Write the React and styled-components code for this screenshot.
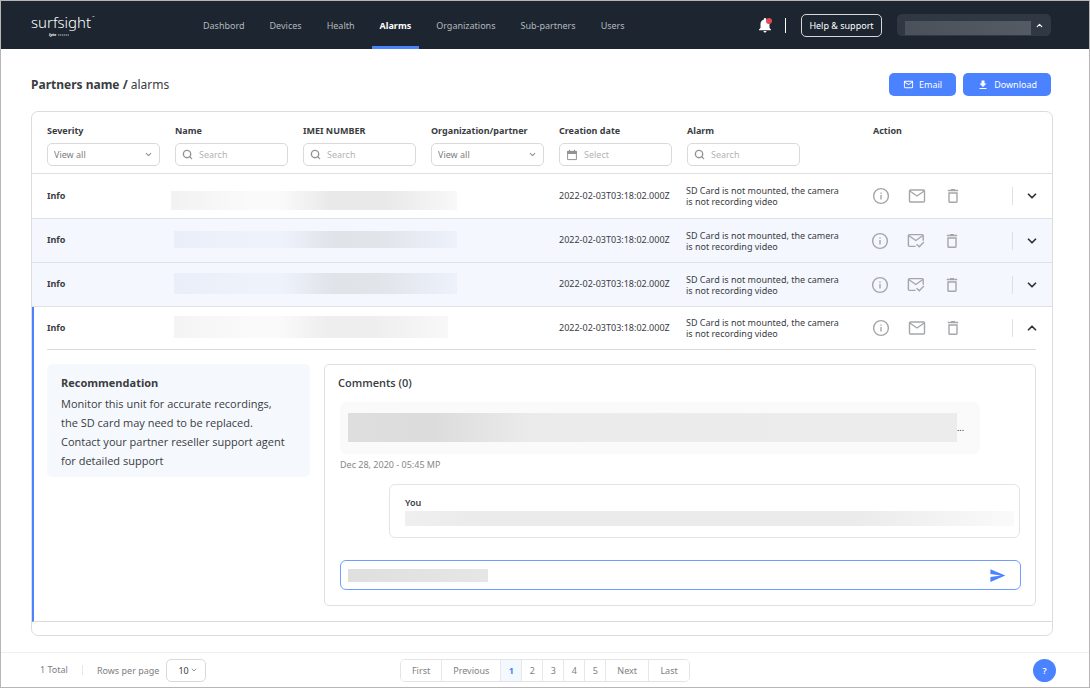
import React from "react";
import styled, { createGlobalStyle } from "styled-components";
import { FiChevronDown, FiChevronUp, FiSearch } from "react-icons/fi";
import {
  MdDownload,
  MdNotifications,
  MdOutlineEmail,
  MdSend,
} from "react-icons/md";

const GlobalStyle = createGlobalStyle`
  *, *::before, *::after {
    box-sizing: border-box;
  }

  body {
    margin: 0;
    background: #fff;
    color: #3a3c3f;
    font-family: "Noto Sans", "Open Sans", sans-serif;
    font-size: 9px;
  }

  button, input, select {
    font-family: inherit;
    font-size: inherit;
    color: inherit;
  }

  button {
    cursor: pointer;
  }

  p, h1, h2, h3 {
    margin: 0;
  }
`;

const Page = styled.div`
  display: flex;
  flex-direction: column;
  min-height: 100vh;
  border: 1px solid #b9b5b7;
`;

/* ---------- top bar ---------- */

const TopBar = styled.header`
  display: flex;
  align-items: center;
  height: 48px;
  padding: 0 38px 0 30px;
  background: #1c2530;
  color: #fff;
`;

const Logo = styled.a`
  display: block;
  width: 66px;
  color: #fff;

  svg {
    display: block;
  }
`;

const Nav = styled.nav`
  display: flex;
  gap: 9px;
  height: 100%;
  margin-left: 98px;
`;

const NavLink = styled.a`
  display: flex;
  align-items: center;
  padding: 3px 8px 0;
  border-bottom: 3px solid ${({ $active }) => ($active ? "#4a82ff" : "transparent")};
  color: ${({ $active }) => ($active ? "#fff" : "#b4b8bd")};
  font-weight: ${({ $active }) => ($active ? 700 : 400)};
  text-decoration: none;
`;

const TopRight = styled.div`
  display: flex;
  align-items: center;
  gap: 15px;
  margin-left: auto;
`;

const Bell = styled.button`
  position: relative;
  display: flex;
  padding: 0;
  border: 0;
  background: none;
  color: #fff;
`;

const BellBadge = styled.span`
  position: absolute;
  top: 2px;
  right: 2px;
  width: 6px;
  height: 6px;
  border-radius: 50%;
  background: #e5484d;
`;

const TopDivider = styled.span`
  width: 1px;
  height: 15px;
  margin-left: -4px;
  background: #fff;
`;

const HelpButton = styled.button`
  height: 23px;
  width: 81px;
  padding: 0;
  border: 1px solid #d6d8da;
  border-radius: 5px;
  background: none;
  color: #fff;
`;

const Account = styled.button`
  display: flex;
  align-items: center;
  gap: 4px;
  width: 154px;
  height: 22px;
  padding: 0 7px 0 8px;
  border: 0;
  border-radius: 5px;
  background: #303843;
  color: #fff;
`;

const AccountName = styled.span`
  flex: 1;
  height: 14px;
  margin-top: 6px;
  background: linear-gradient(90deg, #4a515b, #555b64);
`;

/* ---------- title row ---------- */

const Main = styled.main`
  flex: 1;
  padding: 24px 36px 16px 30px;
`;

const TitleRow = styled.div`
  display: flex;
  align-items: center;
  gap: 7px;
  margin-bottom: 15px;
  padding-right: 2px;
`;

const Title = styled.h1`
  margin-right: auto;
  color: #3a3c3f;
  font-size: 12px;
  font-weight: 400;
  line-height: 22px;
`;

const PrimaryButton = styled.button`
  display: flex;
  align-items: center;
  justify-content: center;
  gap: 5px;
  height: 23px;
  padding: 0 14px;
  border: 0;
  border-radius: 5px;
  background: #4a82ff;
  color: #fff;
`;

/* ---------- alarms table ---------- */

const Card = styled.section`
  padding-bottom: 13px;
  border: 1px solid #dcdcdc;
  border-radius: 7px;
`;

const Table = styled.table`
  width: 100%;
  table-layout: fixed;
  border-collapse: separate;
  border-spacing: 0;
`;

const Col = styled.col`
  width: ${({ $width }) => ($width ? `${$width}px` : "auto")};
`;

const HeadCell = styled.th`
  height: 62px;
  padding: 12px 0 0 15px;
  border-bottom: 1px solid #dfdfe0;
  text-align: left;
  vertical-align: top;
  font-weight: 700;
`;

const HeadLabel = styled.label`
  display: block;
  height: 14px;
  margin-bottom: 5px;
  line-height: 14px;
`;

const Field = styled.span`
  display: flex;
  align-items: center;
  gap: 6px;
  width: 113px;
  height: 23px;
  padding: 0 6px;
  border: 1px solid #d9d9db;
  border-radius: 5px;
  background: #fff;
  color: #929396;
  font-weight: 400;

  svg {
    flex: none;
  }
`;

const FieldInput = styled.input`
  flex: 1;
  min-width: 0;
  padding: 0;
  border: 0;
  outline: 0;
  background: none;

  &::placeholder {
    color: #b3b4b6;
    opacity: 1;
  }
`;

const FieldSelect = styled.select`
  flex: 1;
  min-width: 0;
  padding: 0;
  border: 0;
  outline: 0;
  appearance: none;
  background: none;
  color: #7d7f82;
`;

const Row = styled.tr`
  height: ${({ $read, $open }) => ($open ? 42 : $read ? 44 : 45)}px;
  background: ${({ $read }) => ($read ? "#f4f7fe" : "#fff")};

  > td {
    border-bottom: ${({ $open }) => ($open ? "0" : "1px solid #dfe1e5")};
  }

  > td:first-child {
    padding-left: ${({ $open }) => ($open ? 13 : 15)}px;
    border-left: ${({ $open }) => ($open ? "2px solid #4a82ff" : "0")};
  }
`;

const Cell = styled.td`
  padding: 0 0 0 15px;
  line-height: 11px;
  vertical-align: middle;
`;

const Severity = styled(Cell)`
  padding-bottom: 2px;
  font-weight: 700;
`;

const DateCell = styled(Cell)`
  padding-bottom: 2px;
`;

const AlarmCell = styled(Cell)`
  padding-left: 14px;
`;

const HiddenCell = styled(Cell)`
  padding: ${({ $low }) => ($low ? "0 0 8px 11px" : "0 0 3px 14px")};
  vertical-align: ${({ $low }) => ($low ? "bottom" : "middle")};
`;

const tones = {
  grey: "#f2f2f2, #fafafa 28%, #fafafa 38%, #e9e9e9 56%, #e9e9e9 75%, #f8f8f8",
  blue: "#eaeef8, #eef2fb 28%, #eef2fb 38%, #e0e3e8 56%, #e1e4e9 72%, #edf1fa",
  mist: "#f4f4f4, #fafafa 28%, #fafafa 38%, #eeeeee 56%, #eeeeee 72%, #f8f8f8",
  block: "#dedede, #dcdcdc 14%, #ebebeb 30%, #ececec",
  reply: "#efefef, #ebebeb 12%, #ebebeb 74%, #fafafa",
  draft: "#dfdfdf, #e6e6e6",
};

const Redacted = styled.span`
  display: block;
  width: ${({ $width }) => ($width ? `${$width}px` : "100%")};
  height: ${({ $height }) => $height}px;
  background: linear-gradient(90deg, ${({ $tone }) => tones[$tone]});
`;

const ActionCell = styled(Cell)`
  padding-left: ${({ $read }) => ($read ? 12 : 13)}px;
`;

const Actions = styled.span`
  display: flex;
  gap: 16px;
`;

const IconButton = styled.button`
  display: flex;
  padding: 0;
  border: 0;
  background: none;
  color: #a5a6a9;
`;

const ToggleCell = styled(Cell)`
  padding-left: 0;
`;

const ToggleBox = styled.span`
  display: flex;
  align-items: center;
  justify-content: center;
  height: 18px;
  border-left: 1px solid #dfe0e2;
`;

const Toggle = styled(IconButton)`
  color: #303235;
`;

/* ---------- opened alarm ---------- */

const DetailCell = styled.td`
  padding: 0 16px 15px 13px;
  border-left: 2px solid #4a82ff;
  border-bottom: 1px solid #dcdcdc;
`;

const Detail = styled.div`
  display: flex;
  align-items: flex-start;
  gap: 14px;
  padding-top: 14px;
  border-top: 1px solid #dcdcdc;
  font-family: "Open Sans", "Noto Sans", sans-serif;
`;

const Recommendation = styled.section`
  flex: none;
  width: 263px;
  padding: 8px 14px 7px;
  border-radius: 5px;
  background: #f5f9fe;
  font-size: 11px;
  line-height: 19px;
`;

const RecommendationTitle = styled.h2`
  font-size: 11px;
  font-weight: 700;
  line-height: 22px;
`;

const Comments = styled.section`
  flex: 1;
  display: flex;
  flex-direction: column;
  padding: 9px 14px 15px 15px;
  border: 1px solid #e0e0e0;
  border-radius: 5px;
`;

const CommentsTitle = styled.h2`
  margin: 0 0 10px -2px;
  font-size: 11px;
  font-weight: 600;
  line-height: 18px;
`;

const Message = styled.div`
  display: flex;
  align-items: center;
  height: 52px;
  margin-right: 41px;
  padding: 0 16px 1px 8px;
  border-radius: 6px;
  background: #fafafa;
  color: #222;
  line-height: 16px;
`;

const Stamp = styled.time`
  margin-top: 5px;
  color: #85878a;
  font-family: "Noto Sans", "Open Sans", sans-serif;
  line-height: 12px;
`;

const Reply = styled.div`
  height: 54px;
  margin: 13px 1px 22px 49px;
  padding: 11px 5px 0 15px;
  border: 1px solid #e4e4e4;
  border-radius: 6px;
`;

const Author = styled.strong`
  display: block;
  margin-bottom: 2px;
  font-family: "Noto Sans", "Open Sans", sans-serif;
  font-weight: 600;
  line-height: 13px;
`;

const Composer = styled.form`
  display: flex;
  align-items: center;
  height: 30px;
  padding: 0 14px 0 7px;
  border: 1px solid #6f9cff;
  border-radius: 6px;

  ${IconButton} {
    color: #4a82ff;
  }
`;

/* ---------- footer ---------- */

const Footer = styled.footer`
  display: grid;
  grid-template-columns: 1fr auto 1fr;
  align-items: center;
  height: 35px;
  padding: 0 33px;
  border-top: 1px solid #eeeeee;
  color: #7d7f82;
`;

const FooterLeft = styled.div`
  display: flex;
  align-items: center;
  gap: 7px;
  padding-left: 6px;
`;

const Total = styled.span`
  margin-right: 7px;
  padding-right: 14px;
  border-right: 1px solid #e6e6e6;
  line-height: 10px;
`;

const RowsSelect = styled(Field)`
  width: 40px;
  gap: 0;
  padding: 0 7px 0 11px;

  select {
    color: #3a3c3f;
  }
`;

const Pager = styled.nav`
  display: flex;
  height: 23px;
  border: 1px solid #e4e4e6;
  border-radius: 5px;
  overflow: hidden;
`;

const PageButton = styled.button`
  min-width: ${({ $word }) => ($word ? 40 : 21)}px;
  padding: 0 ${({ $word }) => ($word ? 11 : 0)}px;
  border: 0;
  border-right: 1px solid #e8e8ea;
  background: ${({ $current }) => ($current ? "#f3f7fe" : "#fff")};
  color: ${({ $current }) => ($current ? "#4a82ff" : "#7d7f82")};
  font-weight: ${({ $current }) => ($current ? 700 : 400)};

  &:last-child {
    border-right: 0;
  }
`;

const HelpBubble = styled.button`
  justify-self: end;
  width: 23px;
  height: 23px;
  padding: 0;
  border: 0;
  border-radius: 50%;
  background: #4a82ff;
  color: #fff;
  font-weight: 600;
`;

/* ---------- icons ---------- */

const Icon = ({ children, size = 20 }) => (
  <svg
    width={size}
    height={size}
    viewBox="0 0 20 20"
    fill="none"
    stroke="currentColor"
    strokeWidth="1.4"
    aria-hidden="true"
  >
    {children}
  </svg>
);

const InfoIcon = () => (
  <Icon>
    <circle cx="10" cy="10" r="7.4" />
    <path d="M10 9v4.4M10 6.4v1.3" />
  </Icon>
);

const MailIcon = () => (
  <Icon>
    <rect x="2.5" y="4" width="15" height="12" rx="1" />
    <path d="M2.8 5l7.2 5 7.2-5" />
  </Icon>
);

const MailReadIcon = () => (
  <Icon>
    <path d="M9.6 15.4H3.4a1 1 0 0 1-1-1V4.6a1 1 0 0 1 1-1h12.8a1 1 0 0 1 1 1v5.2" />
    <path d="M2.7 4.5l7.1 5 7.1-5" />
    <path d="M10.6 13.2l2.7 2.6 4.6-4.7" />
  </Icon>
);

const TrashIcon = () => (
  <Icon>
    <path d="M6 7h8v8.4a.8.8 0 0 1-.8.8H6.8a.8.8 0 0 1-.8-.8z" />
    <path d="M4.8 4.5h10.4M8 3.6h4" />
  </Icon>
);

const CalendarIcon = () => (
  <svg width="12" height="12" viewBox="0 0 12 12" fill="none" aria-hidden="true">
    <path d="M1.6 2.4h8.8v8.2H1.6z" stroke="currentColor" />
    <path d="M1.2 2h9.6v3H1.2z" fill="currentColor" />
    <path d="M3.5.8v2M8.5.8v2" stroke="currentColor" strokeWidth="1.2" />
  </svg>
);

const LogoMark = () => (
  <svg width="66" height="28" viewBox="0 0 66 28" fill="#fff" aria-hidden="true">
    <text x="0" y="17" fontSize="15" fontWeight="300">
      surfsight
    </text>
    <text x="61" y="7" fontSize="3">
      ™
    </text>
    <text x="18" y="25" fontSize="4" fontStyle="italic" fontWeight="700">
      lytx
    </text>
    <path d="M27 24h11" stroke="#fff" strokeDasharray="1.5 .5" opacity=".7" />
  </svg>
);

/* ---------- data ---------- */

const links = [
  "Dashbord",
  "Devices",
  "Health",
  "Alarms",
  "Organizations",
  "Sub-partners",
  "Users",
];

const columns = [
  { id: "severity", label: "Severity", width: 128, kind: "select" },
  { id: "name", label: "Name", width: 128, kind: "search" },
  { id: "imei", label: "IMEI NUMBER", width: 128, kind: "search" },
  { id: "org", label: "Organization/partner", width: 128, kind: "select" },
  { id: "created", label: "Creation date", width: 128, kind: "date" },
  { id: "alarm", label: "Alarm", width: 186, kind: "search" },
  { id: "action", label: "Action" },
];

const alarms = [
  { id: 1, bar: { $width: 286, $height: 19, $tone: "grey" }, low: true },
  { id: 2, bar: { $width: 283, $height: 17, $tone: "blue" }, read: true },
  { id: 3, bar: { $width: 283, $height: 21, $tone: "blue" }, read: true },
  { id: 4, bar: { $width: 274, $height: 22, $tone: "mist" }, open: true },
];

const pages = ["First", "Previous", "1", "2", "3", "4", "5", "Next", "Last"];

/* ---------- parts ---------- */

const Filter = ({ id, kind }) => {
  if (kind === "select") {
    return (
      <Field>
        <FieldSelect id={id}>
          <option>View all</option>
        </FieldSelect>
        <FiChevronDown size={9} strokeWidth={3} />
      </Field>
    );
  }
  return (
    <Field>
      {kind === "date" ? (
        <CalendarIcon />
      ) : (
        <FiSearch size={11} strokeWidth={3} />
      )}
      <FieldInput id={id} placeholder={kind === "date" ? "Select" : "Search"} />
    </Field>
  );
};

const AlarmRow = ({ bar, low, read, open }) => (
  <Row $read={read} $open={open}>
    <Severity>Info</Severity>
    <HiddenCell colSpan={3} $low={low}>
      <Redacted {...bar} />
    </HiddenCell>
    <DateCell>2022-02-03T03:18:02.000Z</DateCell>
    <AlarmCell>
      SD Card is not mounted, the camera
      <br />
      is not recording video
    </AlarmCell>
    <ActionCell $read={read}>
      <Actions>
        <IconButton aria-label="Details">
          <InfoIcon />
        </IconButton>
        <IconButton aria-label="Send email">
          {read ? <MailReadIcon /> : <MailIcon />}
        </IconButton>
        <IconButton aria-label="Delete">
          <TrashIcon />
        </IconButton>
      </Actions>
    </ActionCell>
    <ToggleCell>
      <ToggleBox>
        <Toggle aria-label={open ? "Collapse" : "Expand"} aria-expanded={!!open}>
          {open ? (
            <FiChevronUp size={14} strokeWidth={3} />
          ) : (
            <FiChevronDown size={14} strokeWidth={3} />
          )}
        </Toggle>
      </ToggleBox>
    </ToggleCell>
  </Row>
);

const AlarmDetail = () => (
  <tr>
    <DetailCell colSpan={8}>
      <Detail>
        <Recommendation>
          <RecommendationTitle>Recommendation</RecommendationTitle>
          <p>
            Monitor this unit for accurate recordings,
            <br />
            the SD card may need to be replaced.
            <br />
            Contact your partner reseller support agent
            <br />
            for detailed support
          </p>
        </Recommendation>
        <Comments>
          <CommentsTitle>Comments (0)</CommentsTitle>
          <Message>
            <Redacted $height={29} $tone="block" />
            ...
          </Message>
          <Stamp>Dec 28, 2020 - 05:45 MP</Stamp>
          <Reply>
            <Author>You</Author>
            <Redacted $height={15} $tone="reply" />
          </Reply>
          <Composer onSubmit={(e) => e.preventDefault()}>
            <Redacted $width={140} $height={13} $tone="draft" />
            <FieldInput aria-label="Write a comment" />
            <IconButton aria-label="Send">
              <MdSend size={17} />
            </IconButton>
          </Composer>
        </Comments>
      </Detail>
    </DetailCell>
  </tr>
);

const App = () => {
  return (
    <Page>
      <GlobalStyle />
      <TopBar>
        <Logo href="#home" aria-label="surfsight">
          <LogoMark />
        </Logo>
        <Nav>
          {links.map((link) => (
            <NavLink key={link} href={`#${link}`} $active={link === "Alarms"}>
              {link}
            </NavLink>
          ))}
        </Nav>
        <TopRight>
          <Bell aria-label="Notifications">
            <MdNotifications size={18} />
            <BellBadge />
          </Bell>
          <TopDivider />
          <HelpButton>Help &amp; support</HelpButton>
          <Account aria-label="Account">
            <AccountName />
            <FiChevronUp size={9} strokeWidth={3} />
          </Account>
        </TopRight>
      </TopBar>

      <Main>
        <TitleRow>
          <Title>
            <strong>Partners name /</strong> alarms
          </Title>
          <PrimaryButton>
            <MdOutlineEmail size={11} />
            Email
          </PrimaryButton>
          <PrimaryButton>
            <MdDownload size={12} />
            Download
          </PrimaryButton>
        </TitleRow>

        <Card>
          <Table>
            <colgroup>
              {columns.map((col) => (
                <Col key={col.id} $width={col.width} />
              ))}
              <Col $width={40} />
            </colgroup>
            <thead>
              <tr>
                {columns.map((col) => (
                  <HeadCell key={col.id} colSpan={col.kind ? 1 : 2}>
                    {col.kind ? (
                      <>
                        <HeadLabel htmlFor={col.id}>{col.label}</HeadLabel>
                        <Filter id={col.id} kind={col.kind} />
                      </>
                    ) : (
                      <HeadLabel as="span">{col.label}</HeadLabel>
                    )}
                  </HeadCell>
                ))}
              </tr>
            </thead>
            <tbody>
              {alarms.map((alarm) => (
                <AlarmRow key={alarm.id} {...alarm} />
              ))}
              <AlarmDetail />
            </tbody>
          </Table>
        </Card>
      </Main>

      <Footer>
        <FooterLeft>
          <Total>1 Total</Total>
          <label htmlFor="rows">Rows per page</label>
          <RowsSelect>
            <FieldSelect id="rows">
              <option>10</option>
            </FieldSelect>
            <FiChevronDown size={8} strokeWidth={3} />
          </RowsSelect>
        </FooterLeft>
        <Pager aria-label="Pages">
          {pages.map((page) => (
            <PageButton
              key={page}
              $word={page.length > 1}
              $current={page === "1"}
            >
              {page}
            </PageButton>
          ))}
        </Pager>
        <HelpBubble aria-label="Help">?</HelpBubble>
      </Footer>
    </Page>
  );
};

export default App;
